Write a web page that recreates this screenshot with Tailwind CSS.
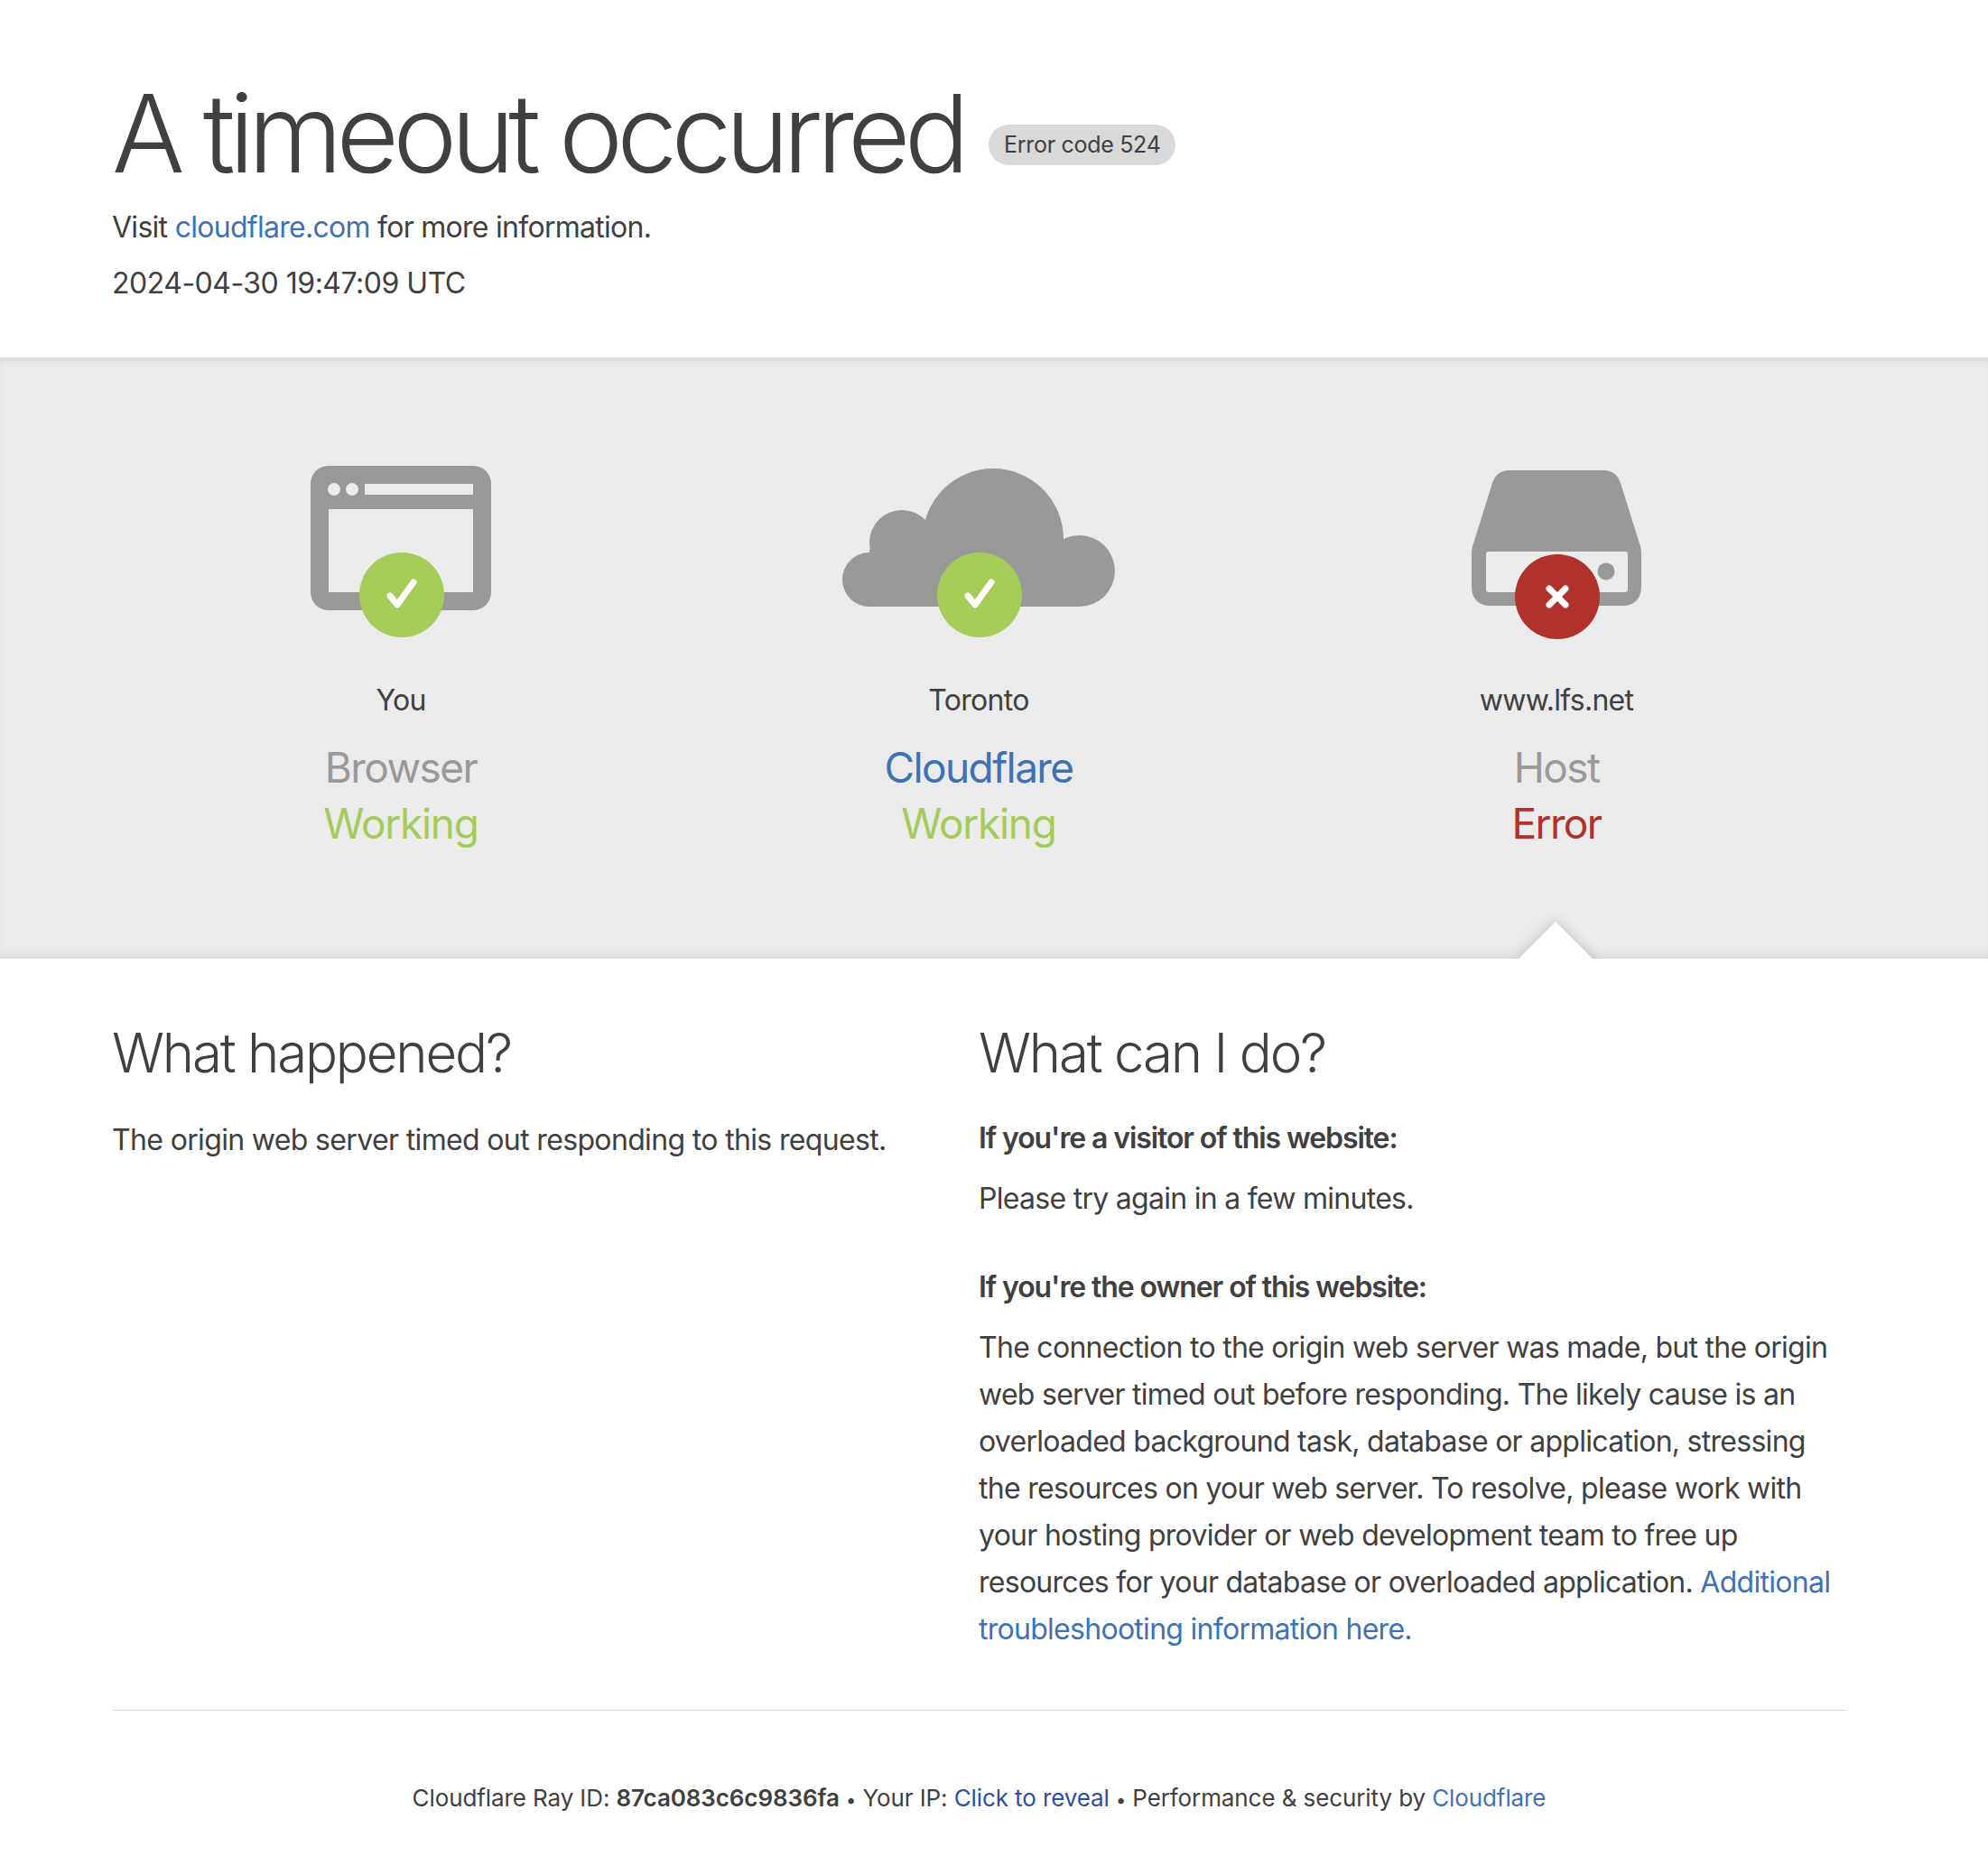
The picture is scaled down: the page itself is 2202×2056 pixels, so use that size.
<!DOCTYPE html>
<html lang="en">
<head>
  <meta charset="UTF-8"/>
  <title>A timeout occurred | www.lfs.net | Cloudflare</title>
  <script src="https://cdn.jsdelivr.net/npm/@tailwindcss/browser@4"></script>
</head>
<body class="bg-white font-[Inter,sans-serif] text-[#404040] text-[32px] leading-[52px] tracking-[-0.72px]">

  <!-- Header -->
  <header class="h-[396px] pl-[124px] pt-[80px]">
    <div class="flex items-center gap-[28px]">
      <h1 class="text-[120px] leading-[136px] font-light tracking-[-6.9px]">A timeout occurred</h1>
      <span class="mt-[25px] h-[45px] px-[17px] rounded-full bg-[#d9d9d9] text-[25px] leading-[45px] tracking-[-0.3px]">Error code 524</span>
    </div>
    <p class="mt-[10px]">Visit <a href="#" class="text-[#3f72b5]">cloudflare.com</a> for more information.</p>
    <p class="mt-[10px] tracking-[-0.5px]">2024-04-30 19:47:09 UTC</p>
  </header>

  <!-- Status band -->
  <section class="relative h-[666px] overflow-hidden bg-[#ebebeb] pl-[124px] pt-[116px] shadow-[inset_0_14px_12px_-12px_rgba(0,0,0,0.1),inset_0_-10px_14px_-8px_rgba(0,0,0,0.1)]">
    <div class="grid grid-cols-[640px_640px_640px] text-center">

      <div>
        <div class="relative mx-auto flex h-[210px] w-[320px] justify-center">
          <svg width="200" height="160" viewBox="0 0 200 160" class="mt-[4px]">
            <rect width="200" height="160" rx="20" fill="#999"/>
            <rect x="20" y="48" width="160" height="92" fill="#ebebeb"/>
            <rect x="60" y="20" width="120" height="12" fill="#ebebeb"/>
            <circle cx="26" cy="26" r="7" fill="#ebebeb"/>
            <circle cx="46" cy="26" r="7" fill="#ebebeb"/>
          </svg>
          <div class="absolute left-[114px] top-[100px] size-[94px] rounded-full bg-[#a5cc57]">
            <svg width="94" height="94" viewBox="-47 -47 94 94"><path d="M-13 1L-5 11L13-14" fill="none" stroke="#fff" stroke-width="7" stroke-linecap="round" stroke-linejoin="round"/></svg>
          </div>
        </div>
        <p class="mt-[28px]">You</p>
        <p class="mt-[17px] text-[46px] leading-[62px] text-[#999] tracking-[-1.6px]">Browser</p>
        <p class="text-[46px] leading-[62px] text-[#a5cc57] tracking-[-1.3px]">Working</p>
      </div>

      <div>
        <div class="relative mx-auto flex h-[210px] w-[320px] justify-center">
          <svg width="302" height="153" viewBox="0 0 302 153" class="-ml-[1px] mt-[7px]" fill="#999">
            <circle cx="167" cy="78" r="78"/>
            <circle cx="66" cy="82" r="36"/>
            <circle cx="30" cy="123" r="30"/>
            <circle cx="262.5" cy="113.5" r="39.5"/>
            <rect x="30" y="90" width="232" height="63"/>
          </svg>
          <div class="absolute left-[114px] top-[100px] size-[94px] rounded-full bg-[#a5cc57]">
            <svg width="94" height="94" viewBox="-47 -47 94 94"><path d="M-13 1L-5 11L13-14" fill="none" stroke="#fff" stroke-width="7" stroke-linecap="round" stroke-linejoin="round"/></svg>
          </div>
        </div>
        <p class="mt-[28px]">Toronto</p>
        <p class="mt-[17px] text-[46px] leading-[62px] text-[#3f72b5] tracking-[-1.6px]">Cloudflare</p>
        <p class="text-[46px] leading-[62px] text-[#a5cc57] tracking-[-1.3px]">Working</p>
      </div>

      <div>
        <div class="relative mx-auto flex h-[210px] w-[320px] justify-center">
          <svg width="188" height="150" viewBox="0 0 188 150" class="-ml-[1px] mt-[9px]">
            <path d="M41 0H146Q160 0 165 14L185 78Q188 85 188 92V128Q188 150 166 150H22Q0 150 0 128V92Q0 85 3 78L23 14Q28 0 41 0Z" fill="#999"/>
            <rect x="16" y="90" width="157" height="45" rx="3" fill="#ebebeb"/>
            <circle cx="149" cy="112" r="9.5" fill="#999"/>
          </svg>
          <div class="absolute left-[114px] top-[102px] size-[94px] rounded-full bg-[#b0322a]">
            <svg width="94" height="94" viewBox="-47 -47 94 94"><path d="M-9-9L9 9M9-9L-9 9" fill="none" stroke="#fff" stroke-width="7" stroke-linecap="round"/></svg>
          </div>
        </div>
        <p class="mt-[28px]">www.lfs.net</p>
        <p class="mt-[17px] text-[46px] leading-[62px] text-[#999] tracking-[-1.6px]">Host</p>
        <p class="text-[46px] leading-[62px] text-[#b0322a] tracking-[-1.6px]">Error</p>
      </div>
    </div>

    <!-- Pointer to the failing host -->
    <div class="absolute bottom-[-29px] left-[1694px] size-[58px] rotate-45 bg-white shadow-[0_0_16px_rgba(0,0,0,0.2)]"></div>
  </section>

  <!-- Explanation -->
  <main class="pl-[124px] pr-[157px] pt-[66px]">
    <div class="grid grid-cols-[960px_1fr]">
      <div>
        <h2 class="text-[60px] leading-[76px] font-light tracking-[-2.2px]">What happened?</h2>
        <p class="mt-[33px] tracking-[-0.65px]">The origin web server timed out responding to this request.</p>
      </div>
      <div>
        <h2 class="text-[60px] leading-[76px] font-light tracking-[-2.2px]">What can I do?</h2>
        <p class="mt-[31px] font-semibold tracking-[-1.1px]">If you're a visitor of this website:</p>
        <p class="mt-[15px]">Please try again in a few minutes.</p>
        <p class="mt-[46px] font-semibold tracking-[-1.1px]">If you're the owner of this website:</p>
        <p class="mt-[15px]">The connection to the origin web server was made, but the origin web server timed out before responding. The likely cause is an overloaded background task, database or application, stressing the resources on your web server. To resolve, please work with your hosting provider or web development team to free up resources for your database or overloaded application. <a href="#" class="text-[#3f72b5]">Additional troubleshooting information here.</a></p>
      </div>
    </div>
  </main>

  <!-- Footer -->
  <footer class="ml-[124px] mt-[63px] w-[1921px] border-t border-[#dedede] pt-[77px] text-center text-[26px] leading-[40px] tracking-[-0.1px]">
    <p>Cloudflare Ray ID: <strong class="font-semibold">87ca083c6c9836fa</strong> <span class="text-[20px]">•</span> Your IP: <a href="#" class="text-[#2c4fa0]">Click to reveal</a> <span class="text-[20px]">•</span> Performance &amp; security by <a href="#" class="text-[#3f72b5]">Cloudflare</a></p>
  </footer>
</body>
</html>
